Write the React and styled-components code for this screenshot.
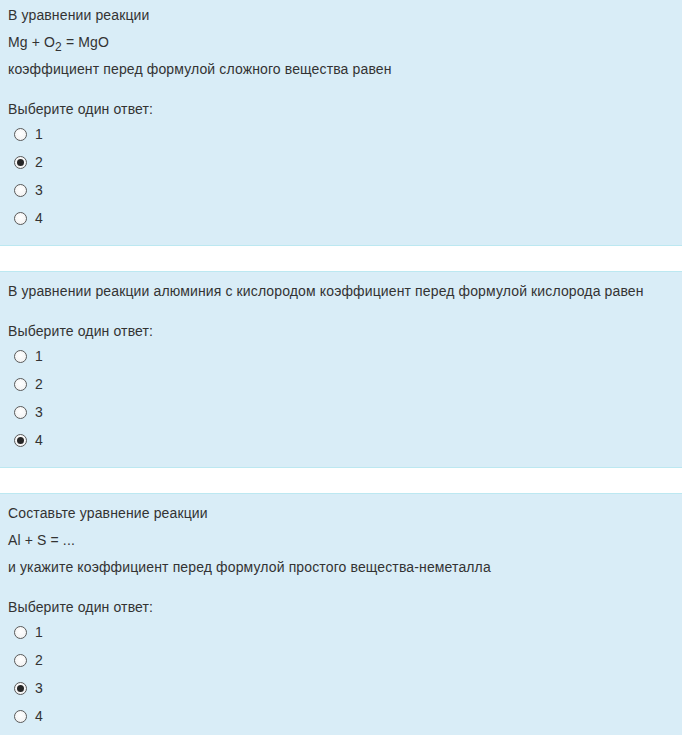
import React from "react";
import styled, { createGlobalStyle } from "styled-components";

const Global = createGlobalStyle`
  html, body { margin: 0; padding: 0; background: #fff; }
  body {
    font-family: "Liberation Sans", Arial, sans-serif;
    font-size: 14px;
    letter-spacing: 0.13px;
    color: #333;
    overflow: hidden;
  }
`;

const Page = styled.div`
  margin-top: -5px;
  display: flex;
  flex-direction: column;
  gap: 25px;
`;

const Formulation = styled.div`
  background: #d9edf7;
  border-top: 1px solid #bce8f1;
  border-bottom: 1px solid #bce8f1;
  padding: 9px 8px 13px 8px;
  display: flex;
  flex-direction: column;
`;

const QText = styled.div`
  display: flex;
  flex-direction: column;
  gap: 7px;
`;

const Line = styled.div`
  line-height: 20px;
  height: 20px;
  white-space: nowrap;
`;

const Sub = styled.sub`
  font-size: 12px;
  line-height: 0;
  vertical-align: -4px;
`;

const Prompt = styled.div`
  margin-top: 20px;
  line-height: 20px;
  height: 20px;
  margin-bottom: 1px;
`;

const Option = styled.label`
  display: flex;
  align-items: center;
  height: 28px;
  padding-left: 6px;
  gap: 8px;
  line-height: 20px;
`;

const Radio = styled.span`
  box-sizing: border-box;
  width: 13px;
  height: 13px;
  border-radius: 50%;
  border: 1px solid #5a5a5a;
  background: radial-gradient(circle at 50% 40%, #ffffff 0%, #f4f4f4 70%, #e6e6e6 100%);
  display: flex;
  align-items: center;
  justify-content: center;
  flex: none;

  &::after {
    content: "";
    width: 7px;
    height: 7px;
    border-radius: 50%;
    background: ${(p) => (p.$checked ? "#262626" : "transparent")};
  }
`;

const questions = [
  {
    lines: [
      "В уравнении реакции",
      <>
        Mg + O<Sub>2</Sub> = MgO
      </>,
      "коэффициент перед формулой сложного вещества равен",
    ],
    checked: 1,
  },
  {
    lines: [
      "В уравнении реакции алюминия с кислородом коэффициент перед формулой кислорода равен",
    ],
    checked: 3,
  },
  {
    lines: [
      "Составьте уравнение реакции",
      "Al + S = ...",
      "и укажите коэффициент перед формулой простого вещества-неметалла",
    ],
    checked: 2,
  },
];

export default function App() {
  return (
    <>
      <Global />
      <Page>
        {questions.map((q, qi) => (
          <Formulation key={qi}>
            <QText>
              {q.lines.map((l, i) => (
                <Line key={i}>{l}</Line>
              ))}
            </QText>
            <Prompt>Выберите один ответ:</Prompt>
            {["1", "2", "3", "4"].map((v, i) => (
              <Option key={v}>
                <Radio $checked={i === q.checked} />
                <span>{v}</span>
              </Option>
            ))}
          </Formulation>
        ))}
      </Page>
    </>
  );
}
